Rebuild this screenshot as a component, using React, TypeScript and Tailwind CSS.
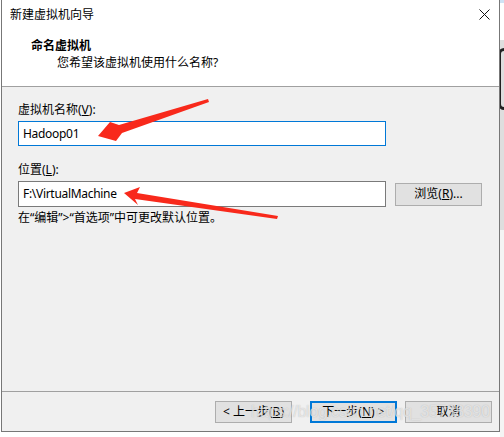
const font = { fontFamily: '"Noto Sans", "Noto Sans CJK SC", sans-serif' };

const Btn = ({ w, primary, children }: { w: string; primary?: boolean; children: React.ReactNode }) => (
  <div
    className={`${w} h-[22px] flex items-center justify-center bg-[#e1e1e1] text-[12px] text-black ${
      primary ? "border-2 border-[#0078d7]" : "border border-[#adadad]"
    }`}
  >
    {children}
  </div>
);

export default function App() {
  return (
    <div className="w-[504px] h-[437px] bg-white flex overflow-hidden relative" style={font}>
      <div className="ml-[1px] w-[499px] h-[432px] border-l border-r border-b border-[#777777] flex flex-col bg-[#f0f0f0] relative">
        {/* header */}
        <div className="h-[87px] bg-white border-b border-[#a0a0a0] flex flex-col">
          <div className="h-[29px] flex items-center justify-between pl-[8px] pr-[9px]">
            <span className="text-[12px] text-black leading-none">新建虚拟机向导</span>
            <svg width="11" height="11" viewBox="0 0 11 11" className="mt-[-1px]">
              <path d="M0.5 0.5 L10.5 10.5 M10.5 0.5 L0.5 10.5" stroke="#111" strokeWidth="1" />
            </svg>
          </div>
          <div className="pl-[29px] mt-[9px] text-[12px] font-bold text-black leading-4">命名虚拟机</div>
          <div className="pl-[55px] mt-[1px] text-[12px] text-black leading-4">您希望该虚拟机使用什么名称?</div>
        </div>

        {/* body */}
        <div className="h-[304px] pl-4 pt-[15px] flex flex-col text-[12px] text-black">
          <div className="leading-4">
            虚拟机名称(<span className="underline">V</span>):
          </div>
          <div className="mt-[3px] w-[368px] h-[25px] border border-[#0078d7] bg-white flex items-center px-1 tracking-[-0.3px]">
            Hadoop01
          </div>
          <div className="leading-4 mt-4">
            位置(<span className="underline">L</span>):
          </div>
          <div className="mt-[3px] flex items-center">
            <div className="w-[368px] h-[26px] border border-[#7a7a7a] bg-white flex items-center px-1 tracking-[-0.3px]">
              F:\VirtualMachine
            </div>
            <div className="ml-[9px] w-[87px] h-[23px] border border-[#adadad] bg-[#e1e1e1] flex items-center justify-center">
              浏览(<span className="underline">R</span>)...
            </div>
          </div>
          <div className="leading-4 mt-[3px]">在“编辑”&gt;“首选项”中可更改默认位置。</div>
        </div>

        {/* footer */}
        <div className="flex-1 border-t border-[#a0a0a0] flex justify-end items-start pt-[9px] pr-[7px]">
          <Btn w="w-[77px]">
            &lt; 上一步(<span className="underline">B</span>)
          </Btn>
          <div className="ml-[18px]">
            <Btn w="w-[87px]" primary>
              下一步(<span className="underline">N</span>) &gt;
            </Btn>
          </div>
          <div className="ml-[8px]">
            <Btn w="w-[87px]">取消</Btn>
          </div>
        </div>

        {/* annotation arrows */}
        <svg className="absolute left-[-2px] top-0 pointer-events-none" width="504" height="437">
          <polygon
            points="208,99 119,125 110,122 98,136 116,141 122,133 209,102"
            fill="#f8291b"
          />
          <polygon
            points="124,193 140,187 137,193 278,216 277,219 135,199 138,205"
            fill="#f8291b"
          />
        </svg>

        {/* watermark */}
        <div
          className="absolute left-[249px] top-[402px] text-[16px] leading-5 text-white/60 tracking-[-0.2px] pointer-events-none"
          style={{ fontFamily: '"Liberation Sans", sans-serif', textShadow: "0 0 1px rgba(140,140,140,0.6)" }}
        >
          https://blog.csdn.net/qq_35738390
        </div>
      </div>

      {/* neighbouring window edge */}
      <div className="w-[4px] flex flex-col">
        <div className="h-[3px] bg-[#cfe3f5]" />
        <div className="h-[37px] bg-white" />
        <div className="h-[190px] bg-[#dedede] relative overflow-hidden">
          <div className="absolute left-[-2px] top-[8px] w-[12px] h-[62px] rounded-full border-[3px] border-[#222]" />
        </div>
        <div className="flex-1 bg-[#f4f4f4]" />
      </div>
    </div>
  );
}
